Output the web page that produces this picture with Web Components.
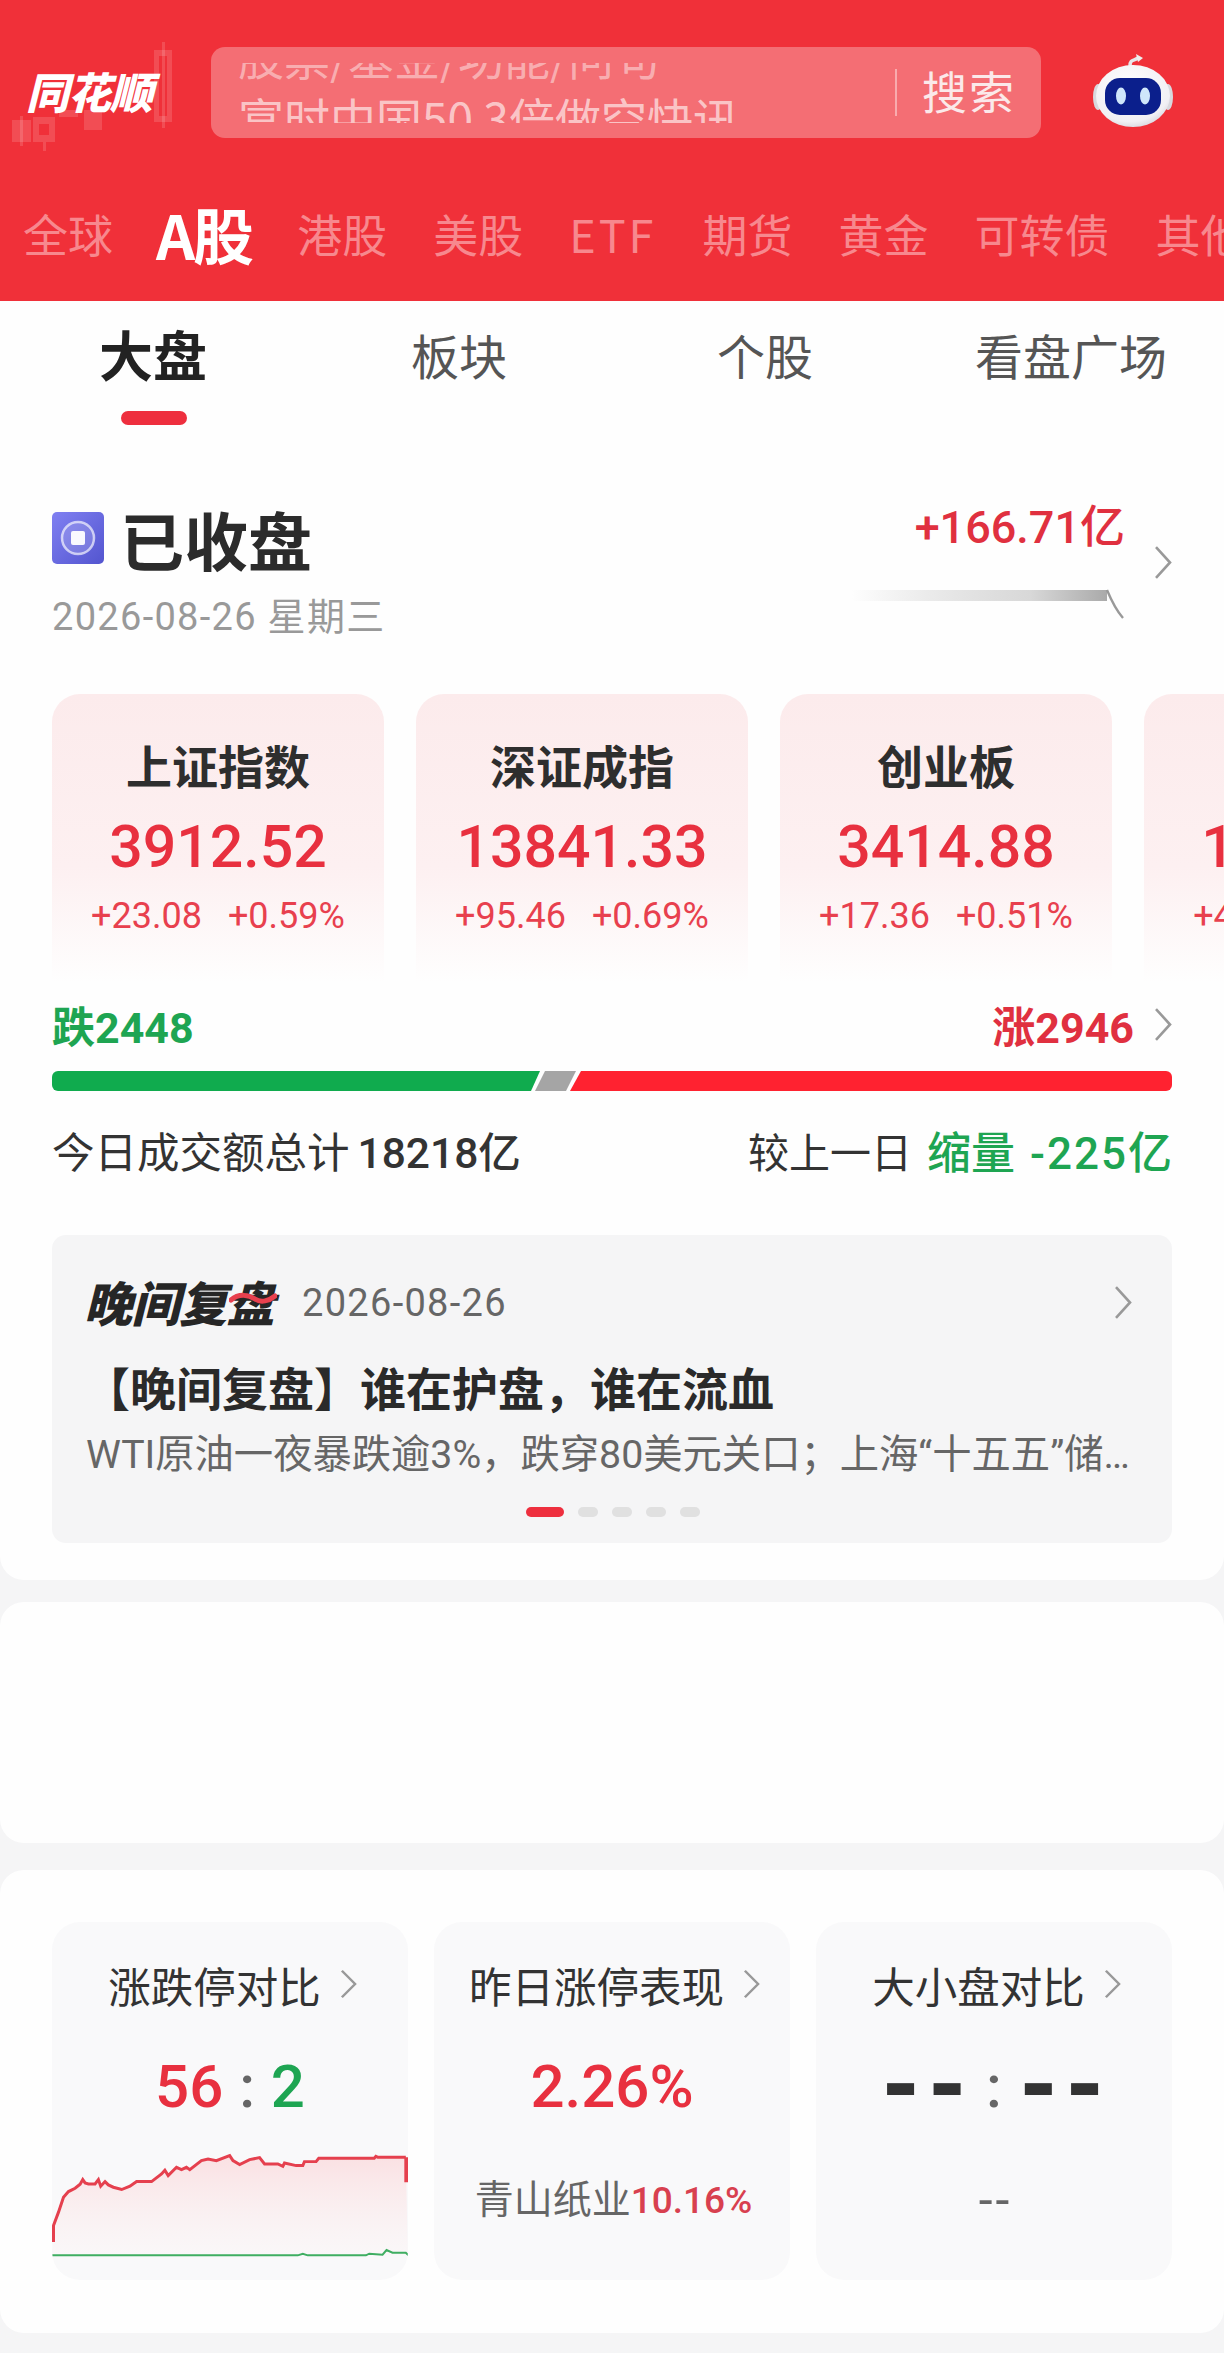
<!DOCTYPE html>
<html lang="zh">
<head>
<meta charset="utf-8">
<title>同花顺</title>
<style>
  html, body { margin: 0; padding: 0; background: #f5f5f6; }
  body {
    width: 1224px;
    height: 2353px;
    overflow: hidden;
    font-family: Roboto, "Noto Sans CJK SC", sans-serif;
  }
</style>
</head>
<body>
  <top-bar></top-bar>

  <market-panel>
    <sub-tabs></sub-tabs>
    <market-status></market-status>
    <index-row>
      <index-card name="上证指数" value="3912.52" diff="+23.08" pct="+0.59%"></index-card>
      <index-card name="深证成指" value="13841.33" diff="+95.46" pct="+0.69%"></index-card>
      <index-card name="创业板" value="3414.88" diff="+17.36" pct="+0.51%"></index-card>
      <index-card name="科创50" value="1342.07" diff="+4.31" pct="+0.32%"></index-card>
    </index-row>
    <breadth-bar></breadth-bar>
    <review-card></review-card>
  </market-panel>

  <blank-panel></blank-panel>

  <stat-panel>
    <stat-card title="涨跌停对比">
      <span slot="value"><b class="up">56</b> <i>:</i> <b class="down">2</b></span>
      <limit-chart slot="extra"></limit-chart>
    </stat-card>
    <stat-card title="昨日涨停表现">
      <span slot="value"><b class="up">2.26%</b></span>
      <span slot="extra" class="sub">青山纸业<em>10.16%</em></span>
    </stat-card>
    <stat-card title="大小盘对比">
      <span slot="value" class="dash"><b>--</b><i>:</i><b>--</b></span>
      <span slot="extra" class="sub grey">--</span>
    </stat-card>
  </stat-panel>

  <style>
    stat-card b { font-weight: 500; }
    stat-card i { font-style: normal; color: #666; margin: 0 1px; font-weight: 500; }
    stat-card .up { color: #e8303f; }
    stat-card .down { color: #1ea552; }
    stat-card .dash { display: flex; align-items: center; justify-content: center; height: 70px; padding-left: 3px; }
    stat-card .dash b { font-size: 92px; line-height: 70px; letter-spacing: 5px; color: #333; font-weight: 900; }
    stat-card .dash i { margin: 0 16px 0 13px; }
    stat-card .sub { display: block; margin-top: 53px; padding-left: 3px; text-align: center; font-size: 39px; line-height: 50px; color: #666; }
    stat-card .sub em { font-style: normal; font-size: 37px; color: #d8404f; font-weight: 500; }
    stat-card .sub.grey { font-size: 50px; letter-spacing: 3px; }
  </style>

<script>
  customElements.define('chev-icon', class extends HTMLElement {
    connectedCallback () {
      const w = this.getAttribute('w') || 18
      const h = this.getAttribute('h') || 35
      this.attachShadow({ mode: 'open' }).innerHTML = `
        <style>:host { display: inline-flex; flex: none; }</style>
        <svg width="${w}" height="${h}" viewBox="0 0 18 34" preserveAspectRatio="none" fill="none">
          <path d="M2 2 L16 17 L2 32" stroke="#999" stroke-width="2.6"/>
        </svg>`
    }
  })

  customElements.define('top-bar', class extends HTMLElement {
    constructor () {
      super()
      const tabs = ['全球', 'A股', '港股', '美股', 'ETF', '期货', '黄金', '可转债', '其他']
      const cls = t => t === 'A股' ? 'on' : t === 'ETF' ? 'en' : ''
      this.attachShadow({ mode: 'open' }).innerHTML = `
        <style>
          :host {
            display: block; height: 301px; background: #f03039; overflow: hidden;
            font-family: "Noto Sans CJK SC", sans-serif;
          }
          .row { display: flex; align-items: center; height: 91px; margin-top: 47px; }
          .logo { position: relative; width: 211px; height: 91px; flex: none; }
          .logo svg { position: absolute; left: 0; top: -47px; }
          .logo span {
            position: absolute; left: 26px; top: 15px; color: #fff;
            font-size: 43px; line-height: 56px; font-weight: 900; font-style: italic;
            letter-spacing: -1px; white-space: nowrap;
          }
          .search {
            width: 830px; height: 91px; flex: none; box-sizing: border-box;
            background: rgba(255,255,255,.3); border-radius: 14px;
            display: flex; align-items: center;
          }
          .ticker { flex: 1; height: 60px; overflow: hidden; margin-left: 27px; }
          .ticker div {
            font-size: 46px; line-height: 62px; color: rgba(255,255,255,.62);
            white-space: nowrap;
          }
          .ticker div:first-child { margin-top: -39px; color: rgba(255,255,255,.45); }
          .sep { width: 2px; height: 47px; background: rgba(255,255,255,.42); }
          .go { width: 144px; text-align: center; font-size: 45px; letter-spacing: 2px; color: #fbe9ea; margin-top: -5px; }
          .bot { margin-left: 51px; display: flex; margin-top: -5px; }
          nav {
            display: flex; align-items: center; height: 92px; margin-top: 49px;
            padding-left: 23px; gap: 46px; white-space: nowrap;
            font-size: 45px; color: #f7888e;
          }
          nav span.on { color: #fff; font-size: 61px; font-weight: 700; letter-spacing: -2px; margin-left: -3px; margin-right: -1px; }
          nav span.en { letter-spacing: 3px; }
        </style>
        <div class="row">
          <div class="logo">
            <svg width="190" height="160" viewBox="0 0 190 160" fill="rgba(255,255,255,.14)">
              <rect x="12" y="120" width="19" height="22"/>
              <rect x="20" y="116" width="3" height="30"/>
              <path fill-rule="evenodd" d="M33 117h22v25h-22z M39 124v11h10v-11z"/>
              <rect x="43" y="142" width="3" height="9"/>
              <rect x="59" y="110" width="19" height="7"/>
              <rect x="84" y="110" width="18" height="20"/>
              <path fill-rule="evenodd" d="M154 50h18v72h-18z M159 56v60h8v-60z"/>
              <rect x="162" y="42" width="3" height="86"/>
            </svg>
            <span>同花顺</span>
          </div>
          <div class="search">
            <div class="ticker">
              <div>股票/基金/功能/问句</div>
              <div>富时中国50 3倍做空快讯</div>
            </div>
            <i class="sep"></i>
            <div class="go">搜索</div>
          </div>
          <div class="bot">
            <svg width="82" height="74" viewBox="0 0 82 74">
              <defs><radialGradient id="hd" cx=".45" cy=".35" r=".75">
                <stop offset="0" stop-color="#fff"/><stop offset=".75" stop-color="#f1f0f4"/><stop offset="1" stop-color="#c9c8d2"/>
              </radialGradient></defs>
              <path d="M38 13 C38 6 42 8 46 5" fill="none" stroke="#e8e6ea" stroke-width="3.5"/>
              <path d="M44 1 L51 5 L46 9z" fill="#eee"/>
              <ellipse cx="6" cy="44" rx="5" ry="13" fill="#d8d8de"/>
              <ellipse cx="76" cy="44" rx="5" ry="13" fill="#d8d8de"/>
              <ellipse cx="41" cy="43" rx="37" ry="31" fill="url(#hd)"/>
              <rect x="13" y="25" width="56" height="37" rx="15" fill="#0b1f8c"/>
              <ellipse cx="29" cy="43" rx="5" ry="8.5" fill="#cfe6fb"/>
              <ellipse cx="53" cy="43" rx="5" ry="8.5" fill="#cfe6fb"/>
            </svg>
          </div>
        </div>
        <nav>${tabs.map(t => `<span class="${cls(t)}">${t}</span>`).join('')}</nav>`
    }
  })

  customElements.define('market-panel', class extends HTMLElement {
    constructor () {
      super()
      this.attachShadow({ mode: 'open' }).innerHTML = `
        <style>
          :host {
            display: block; height: 1279px; background: #fefefe;
            border-radius: 0 0 24px 24px; overflow: hidden;
            font-family: "Noto Sans CJK SC", sans-serif;
          }
        </style>
        <slot></slot>`
    }
  })

  customElements.define('sub-tabs', class extends HTMLElement {
    constructor () {
      super()
      this.attachShadow({ mode: 'open' }).innerHTML = `
        <style>
          :host {
            display: flex; height: 123px; padding: 22px 0 0 95px; box-sizing: border-box;
            font-size: 48px; line-height: 62px; color: #555;
          }
          div { flex: none; }
          .a { width: 307px; padding-left: 4px; font-size: 54px; font-weight: 700; color: #222; position: relative; }
          .a i {
            position: absolute; left: 26px; top: 88px; width: 66px; height: 14px;
            border-radius: 7px; background: #ee2f3e;
          }
          .b { width: 306px; margin-left: 5px; }
          .c { width: 258px; }
        </style>
        <div class="a">大盘<i></i></div>
        <div class="b">板块</div>
        <div class="c">个股</div>
        <div>看盘广场</div>`
    }
  })

  customElements.define('market-status', class extends HTMLElement {
    constructor () {
      super()
      this.attachShadow({ mode: 'open' }).innerHTML = `
        <style>
          :host {
            display: flex; justify-content: space-between;
            padding: 82px 52px 0; height: 133px;
          }
          .title { display: flex; align-items: center; gap: 16px; height: 64px; }
          h1 { margin: 0; font-size: 64px; line-height: 64px; font-weight: 700; color: #2b2b2b; }
          .date {
            margin-top: 25px; font-size: 38px; line-height: 44px; color: #999;
            font-family: Roboto, "Noto Sans CJK SC", sans-serif; letter-spacing: 1.3px;
          }
          .flow { display: flex; flex-direction: column; align-items: flex-end; }
          .amt {
            font-family: Roboto, "Noto Sans CJK SC", sans-serif;
            font-size: 45px; line-height: 56px; font-weight: 500; color: #e0303f;
            margin-top: -6px; margin-right: 47px; white-space: nowrap;
          }
          .spark { margin-right: 48px; margin-top: 32px; display: block; }
          .wrap { position: relative; }
          chev-icon { position: absolute; right: 0; top: 39px; }
        </style>
        <div>
          <div class="title">
            <svg width="52" height="52" viewBox="0 0 52 52">
              <defs><linearGradient id="st" x1="0" y1="0" x2="1" y2="1">
                <stop offset="0" stop-color="#8080f2"/><stop offset="1" stop-color="#5355cf"/>
              </linearGradient></defs>
              <rect width="52" height="52" rx="5" fill="url(#st)"/>
              <circle cx="26" cy="26" r="16" fill="rgba(255,255,255,.16)" stroke="rgba(255,255,255,.65)" stroke-width="2.5"/>
              <rect x="19" y="19" width="14" height="14" rx="2" fill="#fff" fill-opacity=".95"/>
            </svg>
            <h1>已收盘</h1>
          </div>
          <div class="date">2026-08-26 星期三</div>
        </div>
        <div class="flow wrap">
          <div class="amt">+166.71亿</div>
          <svg class="spark" width="272" height="32" viewBox="0 0 272 32" fill="none">
            <defs><linearGradient id="sp">
              <stop offset="0" stop-color="#ccc" stop-opacity="0"/><stop offset=".7" stop-color="#d8d8d8"/><stop offset="1" stop-color="#aaa"/>
            </linearGradient></defs>
            <rect x="0" y="2" width="255" height="11" fill="url(#sp)"/>
            <path d="M255 2 C260 14 264 22 271 30" stroke="#999" stroke-width="2.4"/>
          </svg>
          <chev-icon></chev-icon>
        </div>`
    }
  })

  customElements.define('index-row', class extends HTMLElement {
    constructor () {
      super()
      this.attachShadow({ mode: 'open' }).innerHTML = `
        <style>
          :host {
            display: flex; gap: 32px; margin-top: 55px; padding-left: 52px;
            width: 1224px; box-sizing: border-box; overflow: hidden;
          }
        </style>
        <slot></slot>`
    }
  })

  customElements.define('index-card', class extends HTMLElement {
    connectedCallback () {
      const a = n => this.getAttribute(n)
      this.attachShadow({ mode: 'open' }).innerHTML = `
        <style>
          :host {
            display: flex; flex-direction: column; align-items: center; flex: none;
            width: 332px; height: 288px; padding-top: 45px; box-sizing: border-box;
            border-radius: 28px 28px 0 0;
            background: linear-gradient(#fcebec 0%, #fdf0f1 60%, #fefefe 100%);
            font-family: Roboto, "Noto Sans CJK SC", sans-serif;
          }
          .name { font-size: 46px; line-height: 50px; font-weight: 700; color: #2e2e2e; font-family: "Noto Sans CJK SC", sans-serif; white-space: nowrap; }
          .val { margin-top: 23px; font-size: 59px; line-height: 70px; font-weight: 500; color: #e8303f; }
          .chg { margin-top: 14px; display: flex; gap: 26px; font-size: 36px; line-height: 40px; color: #e8404e; white-space: nowrap; }
        </style>
        <div class="name">${a('name')}</div>
        <div class="val">${a('value')}</div>
        <div class="chg"><span>${a('diff')}</span><span>${a('pct')}</span></div>`
    }
  })

  customElements.define('breadth-bar', class extends HTMLElement {
    constructor () {
      super()
      this.attachShadow({ mode: 'open' }).innerHTML = `
        <style>
          :host {
            display: block; padding: 17px 52px 0; height: 253px; box-sizing: border-box;
            font-family: Roboto, "Noto Sans CJK SC", sans-serif;
          }
          .top { display: flex; justify-content: space-between; align-items: center; height: 50px; font-size: 43px; font-weight: 700; }
          .dn { color: #1ea552; }
          .up { color: #e03040; display: flex; align-items: center; gap: 20px; }
          .bar { display: block; margin-top: 22px; }
          .vol { display: flex; justify-content: space-between; margin-top: 38px; height: 50px; font-size: 42.5px; line-height: 50px; color: #333; white-space: nowrap; }
          .vol > span { display: flex; align-items: center; }
          .vol b { font-weight: 500; margin-left: 8px; }
          .pre { font-size: 41px; }
          .g { color: #1ea552; font-weight: 500; font-size: 44px; margin-left: 15px; }
          .g span { margin-left: 15px; letter-spacing: 2px; margin-right: -2px; }
        </style>
        <div class="top">
          <span class="dn">跌2448</span>
          <span class="up">涨2946<chev-icon></chev-icon></span>
        </div>
        <svg class="bar" width="1120" height="20" viewBox="0 0 1120 20">
          <defs><clipPath id="rr"><rect width="1120" height="20" rx="6"/></clipPath></defs>
          <g clip-path="url(#rr)">
            <path d="M0 0 H488 L479 20 H0z" fill="#10ab4e"/>
            <path d="M493 0 H524 L514 20 H483z" fill="#a5a5a5"/>
            <path d="M529 0 H1120 V20 H518z" fill="#ff2230"/>
          </g>
        </svg>
        <div class="vol">
          <span>今日成交额总计<b>18218亿</b></span>
          <span><span class="pre">较上一日</span><span class="g">缩量<span>-225亿</span></span></span>
        </div>`
    }
  })

  customElements.define('review-card', class extends HTMLElement {
    constructor () {
      super()
      this.attachShadow({ mode: 'open' }).innerHTML = `
        <style>
          :host {
            display: block; position: relative; width: 1120px; height: 308px; margin: 0 52px;
            padding: 0 34px; box-sizing: border-box; border-radius: 14px;
            background: #f5f5f6; font-family: Roboto, "Noto Sans CJK SC", sans-serif;
          }
          .head { display: flex; align-items: center; gap: 28px; height: 60px; padding-top: 36px; }
          .brand {
            position: relative; font-size: 48px; line-height: 60px; font-weight: 900; font-style: italic;
            color: #262626; font-family: "Noto Sans CJK SC", sans-serif; letter-spacing: -.5px; margin-left: -2px;
          }
          .brand svg { position: absolute; left: 145px; top: 20px; }
          .date { font-size: 38px; color: #666; letter-spacing: 1.3px; margin-top: 3px; }
          .ttl {
            margin: 25px 0 0 -2px; font-size: 46px; line-height: 60px; font-weight: 700; color: #2a2a2a;
            font-family: "Noto Sans CJK SC", sans-serif; white-space: nowrap;
          }
          .sum {
            margin-top: 13px; width: 1050px; font-size: 39.3px; line-height: 52px; color: #666;
            white-space: nowrap; overflow: hidden; text-overflow: ellipsis;
          }
          .dots { display: flex; gap: 14px; position: absolute; left: 474px; top: 272px; }
          .dots i { width: 20px; height: 10px; border-radius: 5px; background: #e0e0e0; }
          .dots i:first-child { width: 38px; background: #ee2f3e; }
          chev-icon { position: absolute; right: 40px; top: 50px; }
        </style>
        <div class="head">
          <span class="brand">晚间复盘<svg width="48" height="16" viewBox="0 0 48 16" fill="none"><path d="M2 9 C10 2 20 4 26 8 C32 12 40 10 46 5" stroke="#e8404e" stroke-width="5" stroke-linecap="round"/></svg></span>
          <span class="date">2026-08-26</span>
        </div>
        <chev-icon></chev-icon>
        <div class="ttl">【晚间复盘】谁在护盘，谁在流血</div>
        <div class="sum">WTI原油一夜暴跌逾3%，跌穿80美元关口；上海“十五五”储备项目加速落地</div>
        <div class="dots"><i></i><i></i><i></i><i></i><i></i></div>`
    }
  })

  customElements.define('blank-panel', class extends HTMLElement {
    constructor () {
      super()
      this.attachShadow({ mode: 'open' }).innerHTML = `
        <style>:host { display: block; height: 241px; margin-top: 22px; background: #fefefe; border-radius: 24px; }</style>`
    }
  })

  customElements.define('stat-panel', class extends HTMLElement {
    constructor () {
      super()
      this.attachShadow({ mode: 'open' }).innerHTML = `
        <style>
          :host {
            display: grid; grid-template-columns: repeat(3, 356px); gap: 26px;
            height: 463px; margin-top: 27px; padding: 52px 52px 0; box-sizing: border-box;
            background: #fefefe; border-radius: 24px; align-items: start;
          }
        </style>
        <slot></slot>`
    }
  })

  customElements.define('stat-card', class extends HTMLElement {
    connectedCallback () {
      this.attachShadow({ mode: 'open' }).innerHTML = `
        <style>
          :host {
            display: block; height: 358px; padding-top: 37px; box-sizing: border-box;
            background: #f9f9fa; border-radius: 28px; overflow: hidden;
            font-family: Roboto, "Noto Sans CJK SC", sans-serif;
          }
          .t { display: flex; align-items: center; justify-content: center; gap: 19px; height: 50px; padding-left: 5px; font-size: 42.5px; color: #333; }
          .v { margin-top: 43px; height: 70px; text-align: center; font-size: 60px; line-height: 70px; }
        </style>
        <div class="t">${this.getAttribute('title')}<chev-icon w="17" h="30"></chev-icon></div>
        <div class="v"><slot name="value"></slot></div>
        <slot name="extra"></slot>`
    }
  })

  customElements.define('limit-chart', class extends HTMLElement {
    constructor () {
      super()
      const red = 'M70 1020 L70 970 L85 930 L100 885 L115 868 L135 858 L150 846 L158 832 L165 842 L175 845 L195 845 L205 832 L212 852 L225 838 L235 848 L250 855 L275 862 L300 852 L320 838 L365 838 L395 815 L405 804 L415 820 L440 795 L455 802 L470 795 L480 802 L515 775 L535 770 L560 775 L600 760 L610 775 L630 787 L660 772 L690 766 L705 785 L745 785 L760 792 L765 782 L800 790 L820 790 L825 778 L860 778 L868 768 L1035 768 L1040 762 L1046 765 L1130 765'
      const green = 'M66 1060 H805 L820 1055 L835 1060 H1010 L1020 1055 L1060 1058 L1072 1044 L1090 1052 L1130 1052 L1138 1060'
      this.attachShadow({ mode: 'open' }).innerHTML = `
        <style>:host { display: block; margin-top: 27px; height: 113px; } svg { display: block; }</style>
        <svg width="356" height="113" viewBox="66 740 1070 340" fill="none">
          <defs><linearGradient id="lc" x1="0" y1="0" x2="0" y2="1">
            <stop offset="0" stop-color="#fae0e2"/><stop offset="1" stop-color="#fbf4f5" stop-opacity=".4"/>
          </linearGradient></defs>
          <path d="${red} L1136 1060 L66 1060z" fill="url(#lc)"/>
          <path d="${red}" stroke="#e5404e" stroke-width="9"/>
          <path d="M1132 765 V840" stroke="#e5404e" stroke-width="13"/>
          <path d="${green}" stroke="#3fae62" stroke-width="6"/>
        </svg>`
    }
  })
</script>
</body>
</html>
